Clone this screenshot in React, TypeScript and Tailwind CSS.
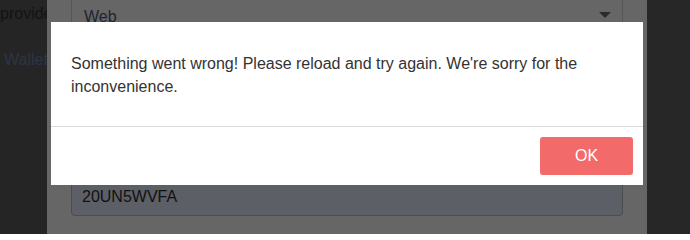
import React from 'react';

const ErrorModal = () => (
  <div className="absolute left-[51px] top-[22px] w-[592px] bg-white flex flex-col">
    {/* body */}
    <div className="px-5 pt-[30px] pb-[28px] text-[16px] leading-[23px] text-[#333]">
      Something went wrong! Please reload and try again. We're sorry for the inconvenience.
    </div>
    {/* footer */}
    <div className="border-t border-[#d9d9d9] p-[10px] flex justify-end">
      <button className="w-[93px] h-[38px] rounded-[3px] bg-[#f26a6a] text-white text-[16px]">
        OK
      </button>
    </div>
  </div>
);

export default function App() {
  return (
    <div
      className="relative w-[690px] h-[234px] overflow-hidden flex bg-[#252525]"
      style={{ fontFamily: '"Liberation Sans", Arial, sans-serif' }}
    >
      {/* left page strip */}
      <div className="w-[47px] shrink-0 overflow-hidden text-[16px] text-[#131313] whitespace-nowrap">
        <div className="mt-[5px] leading-[18px]">provide</div>
        <div className="mt-[28px] ml-[4px] leading-[18px] text-[#2c3645]">Wallet</div>
      </div>

      {/* form panel behind backdrop */}
      <div className="w-[600px] shrink-0 bg-[#666666] px-6 flex flex-col">
        <div className="-mt-[4px] h-[38px] border border-[#555] rounded-[4px] flex items-center justify-between pl-[12px] pr-[11px] text-[16px] text-[#1d2430]">
          <span className="mt-[4px]">Web</span>
          <span className="w-0 h-0 border-l-[6px] border-r-[6px] border-t-[6px] border-l-transparent border-r-transparent border-t-[#2b2b2b]" />
        </div>
        <div className="mt-[144px] h-[38px] rounded-[4px] border border-[#4c4c4c] bg-[#5c5f66] flex items-center pl-[10px] text-[16px] text-[#111]">
          20UN5WVFA
        </div>
      </div>

      {/* right page strip */}
      <div className="flex-1 bg-[#272727]" />

      <ErrorModal />
    </div>
  );
}
